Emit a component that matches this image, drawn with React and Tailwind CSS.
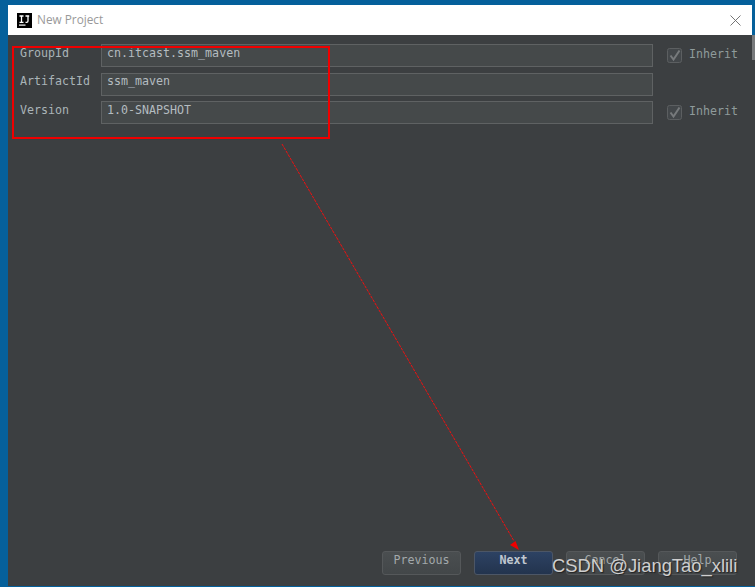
const mono = "font-['DejaVu_Sans_Mono',monospace] text-[11.65px]";

function Row({ label, value, inherit, low, className }) {
  return (
    <div className={`flex items-center h-[23px] ${className}`}>
      <div className={`w-[81px] text-[#aab4b8] ${low ? "pb-[3px]" : "pb-[5px]"} ${mono}`}>{label}</div>
      <div className={`w-[552px] h-[23px] border border-[#5f6263] bg-[#45494a] pl-[5px] text-[#b4bcc0] ${low ? "leading-[17px]" : "leading-[15px]"} ${mono}`}>{value}</div>
      {inherit && (
        <div className="flex items-center ml-[14px]">
          <svg width="15" height="15" viewBox="0 0 15 15" fill="none">
            <rect x="0.5" y="0.5" width="14" height="14" rx="2" fill="#43474a" stroke="#5c5f61" />
            <path d="M3.5 7.5 L6.5 11.5 L12.5 2.5" stroke="#777a7c" strokeWidth="2" />
          </svg>
          <span className={`ml-[7px] pb-[2px] text-[#8f9b9b] ${mono}`}>Inherit</span>
        </div>
      )}
    </div>
  );
}

function Btn({ children, primary }) {
  return (
    <button
      className={`w-[79px] h-[24px] rounded-[3px] border pb-[4px] ${mono} ${
        primary
          ? "border-[#4c5666] bg-gradient-to-b from-[#2d4263] to-[#23344e] text-[#c0c8d0] font-bold"
          : "border-[#55585a] bg-gradient-to-b from-[#4a4e50] to-[#434749] text-[#a3a9ab]"
      }`}
    >
      {children}
    </button>
  );
}

export default function App() {
  return (
    <div className="relative w-[755px] h-[587px] overflow-hidden bg-[#05609b] pt-[5px] pl-[8px] pb-[1px]">
      <div className="flex flex-col h-full">
        <div className="flex items-center h-[30px] mr-[3px] bg-white pl-[9px] pr-[11px] shrink-0">
          <svg width="15" height="15" viewBox="0 0 15 15">
            <rect width="15" height="15" fill="#000" />
            <rect x="2" y="11.5" width="6.5" height="1.2" fill="#fff" />
            <path d="M2.5 3 H6.5 M4.5 3 V9.4 M2.5 9.4 H6.5 M8.5 3 H12.2 M11 3 V8 Q11 9.4 9.6 9.4 H8.5" stroke="#fff" strokeWidth="1.3" fill="none" />
          </svg>
          <span className="ml-[5px] font-['Open_Sans',sans-serif] text-[11.8px] text-[#999999]">New Project</span>
          <svg className="ml-auto" width="11" height="11" viewBox="0 0 11 11">
            <path d="M0.5 0.5 L10.5 10.5 M10.5 0.5 L0.5 10.5" stroke="#666" strokeWidth="0.9" />
          </svg>
        </div>
        <div className="relative flex-1 bg-[#3c3f41] pt-[9px] pl-[12px] flex flex-col">
          <div className="absolute right-0 top-0 w-[3px] h-[25px] bg-[#77797b]" />
          <Row low label="GroupId" value="cn.itcast.ssm_maven" inherit />
          <Row className="mt-[6px]" label="ArtifactId" value="ssm_maven" />
          <Row low className="mt-[5px]" label="Version" value="1.0-SNAPSHOT" inherit />
          <div className="mt-auto mb-[11px] flex gap-[13px] pl-[362px]">
            <Btn>Previous</Btn>
            <Btn primary>Next</Btn>
            <Btn>Cancel</Btn>
            <Btn>Help</Btn>
          </div>
        </div>
      </div>

      <div className="absolute left-[12px] top-[46px] w-[318px] h-[93px] border-[2px] border-[#f00000]" />
      <svg className="absolute left-0 top-0" width="755" height="587" viewBox="0 0 755 587" fill="none">
        <path d="M282 144 L514 541" stroke="#f01010" strokeWidth="1" strokeDasharray="3 1" />
        <path d="M519 550 L510 545 L515.5 541 Z" fill="#f00000" />
      </svg>
      <span className="absolute left-[552px] top-[555px] font-['Liberation_Sans',sans-serif] text-[18.4px] leading-[22px] text-[#cfcfcf] [text-shadow:1px_1px_1px_#222]">
        CSDN @JiangTao_xlili
      </span>
    </div>
  );
}
